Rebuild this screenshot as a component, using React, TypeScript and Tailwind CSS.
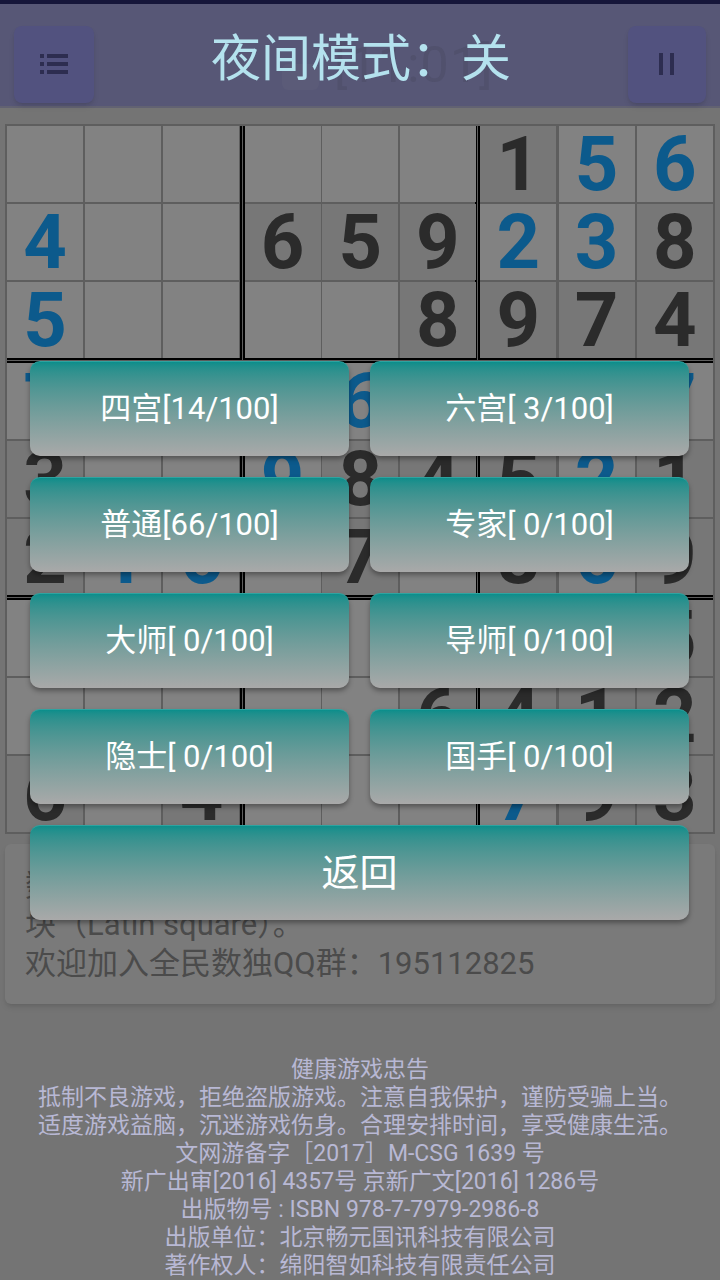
import React from 'react';

// 0 = empty, positive = given (black), negative = entered (blue)
const board: number[][] = [
  [0, 0, 0, 0, 0, 0, 1, -5, -6],
  [-4, 0, 0, 6, 5, 9, -2, -3, 8],
  [-5, 0, 0, 0, 0, 8, 9, 7, 4],
  [-7, 0, 0, 0, -6, 0, 0, 0, -7],
  [3, 0, 0, -9, 8, 4, 5, -2, 1],
  [2, -1, -6, 0, 7, 0, 8, -6, 9],
  [0, 0, 0, 0, 0, 0, 0, 0, 5],
  [0, 0, 0, 0, 0, 6, 4, 1, 2],
  [6, 0, 4, 0, 0, 0, -7, 9, 3],
];

const levels = [
  '四宫[14/100]',
  '六宫[ 3/100]',
  '普通[66/100]',
  '专家[ 0/100]',
  '大师[ 0/100]',
  '导师[ 0/100]',
  '隐士[ 0/100]',
  '国手[ 0/100]',
];

const notice = [
  '健康游戏忠告',
  '抵制不良游戏，拒绝盗版游戏。注意自我保护，谨防受骗上当。',
  '适度游戏益脑，沉迷游戏伤身。合理安排时间，享受健康生活。',
  '文网游备字［2017］M-CSG 1639 号',
  '新广出审[2016] 4357号 京新广文[2016] 1286号',
  '出版物号 : ISBN 978-7-7979-2986-8',
  '出版单位：北京畅元国讯科技有限公司',
  '著作权人：绵阳智如科技有限责任公司',
];

const font = { fontFamily: 'Roboto, "Noto Sans CJK SC", sans-serif' };

function Cell({ v }: { v: number }) {
  const given = v > 0;
  return (
    <div
      className={`w-[76px] h-[76px] flex items-center justify-center text-[76px] font-bold leading-none ${
        given ? 'bg-[#777777] text-[#2b2b2b]' : 'bg-[#828282] text-[#0c5a8c]'
      }`}
    >
      {v !== 0 ? Math.abs(v) : ''}
    </div>
  );
}

function Block({ br, bc }: { br: number; bc: number }) {
  const rows = [0, 1, 2].map((r) => board[br * 3 + r].slice(bc * 3, bc * 3 + 3));
  return (
    <div
      className={`grid grid-cols-3 gap-[2px] bg-[#5e5e5e] ${bc > 0 ? 'border-l-2 border-l-black' : ''} ${
        bc < 2 ? 'border-r-2 border-r-black' : ''
      } ${br > 0 ? 'border-t-2 border-t-black' : ''} ${br < 2 ? 'border-b-2 border-b-black' : ''}`}
    >
      {rows.flat().map((v, i) => (
        <Cell key={i} v={v} />
      ))}
    </div>
  );
}

function ListIcon() {
  return (
    <svg width="28" height="22" viewBox="0 0 28 22" fill="#2d2d50">
      <rect x="0" y="1" width="4" height="4" />
      <rect x="7" y="1" width="21" height="4" />
      <rect x="0" y="9" width="4" height="4" />
      <rect x="7" y="9" width="21" height="4" />
      <rect x="0" y="17" width="4" height="4" />
      <rect x="7" y="17" width="21" height="4" />
    </svg>
  );
}

function PauseIcon() {
  return (
    <svg width="18" height="22" viewBox="0 0 18 22" fill="#2d2d50">
      <rect x="1" y="0" width="4" height="22" />
      <rect x="12" y="0" width="4" height="22" />
    </svg>
  );
}

export default function App() {
  return (
    <div className="relative w-[720px] h-[1280px] overflow-hidden bg-[#747474]" style={font}>
      {/* status bar */}
      <div className="h-[4px] bg-[#16163a]" />

      {/* header */}
      <div className="h-[104px] bg-[#575776] flex items-center justify-between px-[14px] pb-[4px] border-b-2 border-[#626272]">
        <div className="w-[80px] h-[77px] mt-[22px] rounded-lg bg-[#52527f] shadow-md flex items-center justify-center">
          <ListIcon />
        </div>
        <div className="relative flex-1 h-full">
          <div className="absolute left-[188px] top-[60px] w-[37px] h-[26px] rounded-md bg-[#5b5b78]" />
          <div className="absolute left-[240px] top-[36px] text-[50px] text-[#51516d] leading-none tracking-wide">
            [11:01]
          </div>
          <div className="absolute inset-x-0 top-[30px] text-center text-[50px] leading-none text-[#b4e2ee]">
            夜间模式：关
          </div>
        </div>
        <div className="w-[78px] h-[77px] mt-[22px] rounded-lg bg-[#52527f] shadow-md flex items-center justify-center">
          <PauseIcon />
        </div>
      </div>

      {/* board */}
      <div className="px-[5px] pt-[16px]">
        <div className="grid grid-cols-3 border-2 border-[#5e5e5e] bg-[#5e5e5e] gap-[1px]">
          {[0, 1, 2].map((br) => [0, 1, 2].map((bc) => <Block key={`${br}-${bc}`} br={br} bc={bc} />))}
        </div>
      </div>

      {/* intro card */}
      <div className="mx-[5px] mt-[10px] rounded-md bg-[#7a7a7a] shadow-md px-[20px] pt-[22px] pb-[21px] text-[31px] leading-[39px] text-[#4b4b4b]">
        <div className="whitespace-nowrap overflow-hidden">数独起源于拉丁方阵，是一种源自拉丁方</div>
        <div className="whitespace-nowrap overflow-hidden">块（Latin square）。</div>
        <div className="whitespace-nowrap overflow-hidden">欢迎加入全民数独QQ群：195112825</div>
      </div>

      {/* notice */}
      <div className="mt-[52px] flex flex-col items-center text-[23px] leading-[28px] text-[#b8b8d4]">
        {notice.map((line) => (
          <div key={line} className="whitespace-nowrap">
            {line}
          </div>
        ))}
      </div>

      {/* level dialog */}
      <div className="absolute inset-0 pt-[361px] px-[30px] pr-[31px]">
        <div className="grid grid-cols-2 gap-x-[21px] gap-y-[21px]">
          {levels.map((l) => (
            <button
              key={l}
              className="h-[95px] rounded-[10px] bg-linear-to-b from-[#0a8e8b] to-[#a9a9a9] border-t border-[#2fa3a0] shadow-[0_3px_5px_rgba(0,0,0,0.35)] text-white text-[31px]"
            >
              {l}
            </button>
          ))}
        </div>
        <button className="mt-[21px] w-full h-[95px] rounded-[10px] bg-linear-to-b from-[#0a8e8b] to-[#a9a9a9] border-t border-[#2fa3a0] shadow-[0_3px_5px_rgba(0,0,0,0.35)] text-white text-[38px]">
          返回
        </button>
      </div>
    </div>
  );
}
